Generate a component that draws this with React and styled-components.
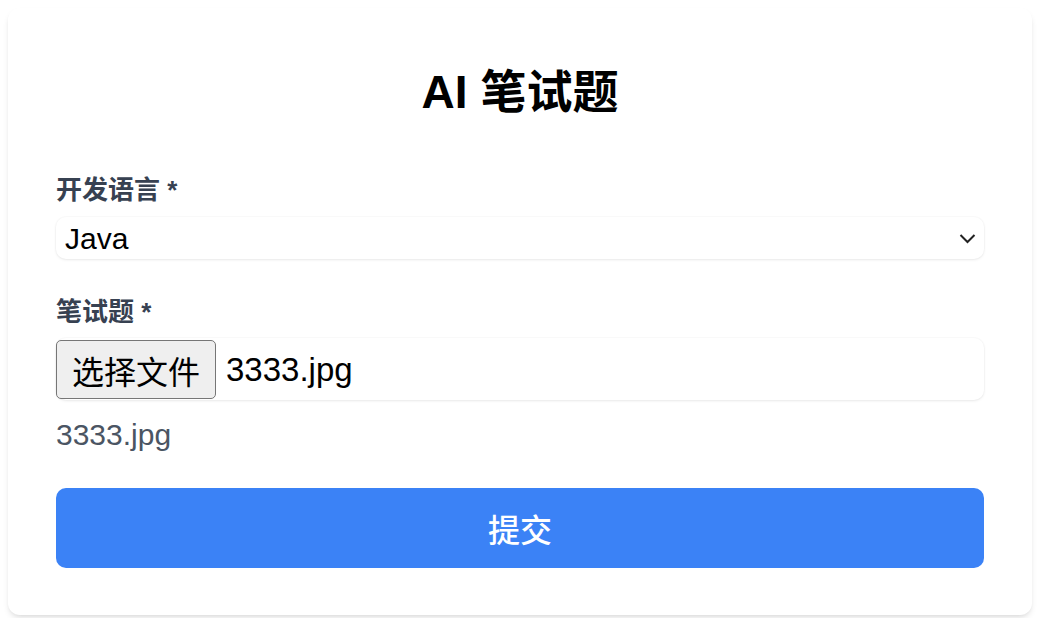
import styled, { createGlobalStyle } from "styled-components";

const GlobalStyle = createGlobalStyle`
  body {
    margin: 0;
    background: #ffffff;
    font-family: "Liberation Sans", "Noto Sans CJK SC", sans-serif;
  }
`;

const Page = styled.div`
  padding: 8px;
`;

const Card = styled.form`
  width: 1024px;
  box-sizing: border-box;
  padding: 48px 48px 47px;
  background: #fff;
  border-radius: 12px;
  box-shadow: 0 4px 6px -1px rgba(0, 0, 0, 0.1), 0 2px 4px -2px rgba(0, 0, 0, 0.08);
  display: flex;
  flex-direction: column;
`;

const Title = styled.h1`
  margin: 0 0 44px;
  font-size: 46px;
  line-height: 72px;
  font-weight: 700;
  text-align: center;
  color: #000;
`;

const Label = styled.label`
  display: block;
  font-size: 26px;
  line-height: 36px;
  font-weight: 600;
  color: #374151;
  margin-bottom: ${(p) => p.$gap}px;
`;

const SelectWrap = styled.div`
  position: relative;
  margin-bottom: 35px;
`;

const Select = styled.select`
  appearance: none;
  width: 100%;
  height: 42px;
  border: none;
  border-radius: 10px;
  background: #fff;
  box-shadow: 0 1px 3px rgba(0, 0, 0, 0.08), 0 0 0 1px rgba(0, 0, 0, 0.015);
  padding: 0 40px 0 9px;
  font-family: inherit;
  font-size: 30px;
  color: #000;
  outline: none;
`;

const Chevron = styled.svg`
  position: absolute;
  right: 8px;
  top: 13px;
  pointer-events: none;
`;

const FileBox = styled.div`
  display: flex;
  align-items: center;
  gap: 10px;
  height: 62px;
  padding: 2px 0 1px;
  box-sizing: border-box;
  border-radius: 10px;
  background: #fff;
  box-shadow: 0 1px 3px rgba(0, 0, 0, 0.08), 0 0 0 1px rgba(0, 0, 0, 0.015);
  margin-bottom: 12px;
  font-size: 33px;
  color: #000;
`;

const FileButton = styled.span`
  display: flex;
  align-items: center;
  justify-content: center;
  width: 160px;
  height: 59px;
  box-sizing: border-box;
  background: #efefef;
  border: 1px solid #767676;
  border-radius: 5px;
  font-size: 32px;
`;

const FileName = styled.p`
  margin: 0 0 31px;
  font-size: 30px;
  line-height: 45px;
  color: #4b5563;
`;

const Submit = styled.button`
  height: 80px;
  border: none;
  border-radius: 10px;
  background: #3b82f6;
  color: #fff;
  font-family: inherit;
  font-size: 32px;
  font-weight: 500;
  cursor: pointer;
`;

export default function App() {
  return (
    <>
      <GlobalStyle />
      <Page>
        <Card onSubmit={(e) => e.preventDefault()}>
          <Title>AI 笔试题</Title>

          <Label $gap={9}>开发语言 *</Label>
          <SelectWrap>
            <Select defaultValue="Java">
              <option>Java</option>
              <option>Python</option>
              <option>Go</option>
            </Select>
            <Chevron width="17" height="17" viewBox="0 0 17 17">
              <polyline
                points="1.5,5 8.5,12 15.5,5"
                fill="none"
                stroke="#222"
                strokeWidth="2"
              />
            </Chevron>
          </SelectWrap>

          <Label $gap={8}>笔试题 *</Label>
          <FileBox>
            <FileButton>选择文件</FileButton>
            <span>3333.jpg</span>
          </FileBox>
          <FileName>3333.jpg</FileName>

          <Submit type="submit">提交</Submit>
        </Card>
      </Page>
    </>
  );
}
